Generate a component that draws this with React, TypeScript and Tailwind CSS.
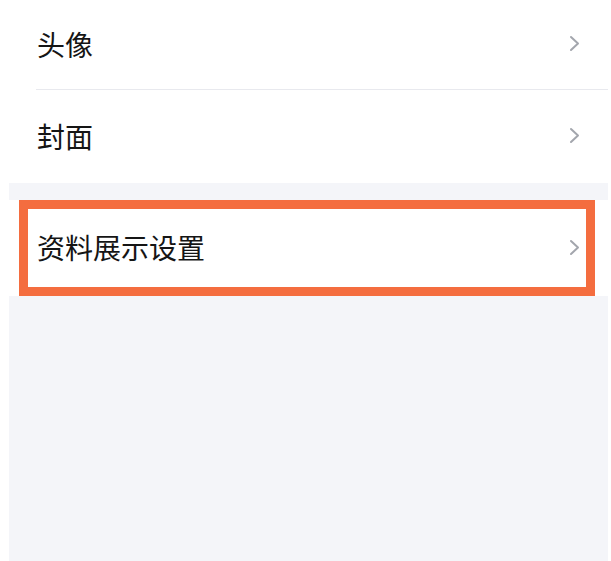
const Chevron = () => (
  <svg width="11" height="17" viewBox="0 0 11 17" fill="none">
    <path
      d="M2 2L9 8.5L2 15"
      stroke="#a3a6ad"
      strokeWidth="2"
      strokeLinecap="round"
      strokeLinejoin="round"
    />
  </svg>
);

const Row = ({ label, className }: { label: string; className: string }) => (
  <div className={`flex items-center justify-between pl-[28px] pr-[28px] ${className}`}>
    <span className="text-[28px] leading-none text-[#151515]">{label}</span>
    <Chevron />
  </div>
);

export default function App() {
  return (
    <div
      className="flex min-h-[561px] w-full bg-white"
      style={{ fontFamily: '"Noto Sans CJK SC", "Noto Sans", sans-serif' }}
    >
      <div className="ml-[9px] mr-[3px] flex flex-1 flex-col bg-[#f4f5f9]">
        {/* Top group */}
        <div className="bg-white">
          <Row label="头像" className="h-[89px] pb-[2px]" />
          <div className="ml-[27px] h-px bg-[#e8e9ee]" />
          <Row label="封面" className="h-[93px] pb-[2px]" />
        </div>

        <div className="h-[17px]" />

        {/* Highlighted row */}
        <div className="relative bg-white">
          <Row label="资料展示设置" className="h-[96px] pb-[2px]" />
          <div className="pointer-events-none absolute bottom-0 left-[10px] right-[13px] top-0 border-[9px] border-[#f46d3f]" />
        </div>

        <div className="flex-1" />
      </div>
    </div>
  );
}
